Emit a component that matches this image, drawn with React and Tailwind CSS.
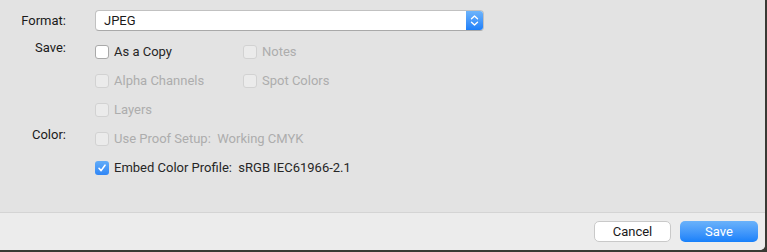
import React from "react";

const font = { fontFamily: 'Roboto, "Liberation Sans", Arial, sans-serif' };

function Check({ checked, disabled }) {
  if (checked) {
    return (
      <span className="flex h-[14px] w-[14px] shrink-0 items-center justify-center rounded-[3px] bg-gradient-to-b from-[#62acf8] to-[#2f86f6]">
        <svg width="10" height="10" viewBox="0 0 10 10">
          <path d="M2 5.3 L4.1 7.6 L8 2.2" fill="none" stroke="white" strokeWidth="1.6" strokeLinecap="round" strokeLinejoin="round" />
        </svg>
      </span>
    );
  }
  return (
    <span
      className={
        "block h-[14px] w-[14px] shrink-0 rounded-[3px] border " +
        (disabled ? "border-[#d2d2d2] bg-[#ebebeb]" : "border-[#a9a9a9] bg-white")
      }
    />
  );
}

function Item({ label, checked, disabled, w }) {
  return (
    <div className={"flex items-center gap-[5px] " + (w ? "w-[148px]" : "")}>
      <Check checked={checked} disabled={disabled} />
      <span className={"text-[13px] leading-[16px] " + (disabled ? "text-[#adadad]" : "text-[#262626]")}>{label}</span>
    </div>
  );
}

function Row({ label, children }) {
  return (
    <div className="flex h-[29px]">
      <div className="w-[66px] pt-[3px] text-right text-[13px] leading-[16px] text-[#1a1a1a]">{label}</div>
      <div className="ml-[29px] flex items-center">{children}</div>
    </div>
  );
}

export default function App() {
  return (
    <div className="h-[252px] w-[767px] bg-[#3a3a34]" style={font}>
      <div className="flex h-[250px] w-[765px] flex-col overflow-hidden rounded-br-[5px] bg-[#e3e3e3]">
        <div className="h-[213px] border-b border-[#d4d4d4] pt-[10px]">
          <div className="flex h-[21px] items-center">
            <div className="w-[66px] text-right text-[13px] leading-[16px] text-[#1a1a1a]">Format:</div>
            <div className="ml-[29px] flex h-[21px] w-[389px] overflow-hidden rounded-[4px] border border-[#c1c1c1] border-b-[#a9a9a9] bg-white">
              <span className="flex-1 pl-[8px] text-[13px] leading-[19px] text-[#1a1a1a]">JPEG</span>
              <span className="flex w-[17px] items-center justify-center bg-gradient-to-b from-[#6db4fb] to-[#1c7ff9]">
                <svg width="9" height="13" viewBox="0 0 9 13">
                  <path d="M1.5 4.8 L4.5 2 L7.5 4.8 M1.5 8.2 L4.5 11 L7.5 8.2" fill="none" stroke="white" strokeWidth="1.4" strokeLinecap="round" strokeLinejoin="round" />
                </svg>
              </span>
            </div>
          </div>
          <div className="mt-[6px]">
            <Row label="Save:">
              <Item label="As a Copy" w />
              <Item label="Notes" disabled />
            </Row>
            <Row label="">
              <Item label="Alpha Channels" disabled w />
              <Item label="Spot Colors" disabled />
            </Row>
            <Row label="">
              <Item label="Layers" disabled />
            </Row>
            <Row label="Color:">
              <Item label={"Use Proof Setup:\u00a0\u00a0Working CMYK"} disabled />
            </Row>
            <Row label="">
              <Item label={"Embed Color Profile:\u00a0\u00a0sRGB IEC61966-2.1"} checked />
            </Row>
          </div>
        </div>
        <div className="flex flex-1 justify-end gap-[9px] bg-[#ececec] pr-[7px] pt-[8px]">
          <button className="h-[21px] w-[77px] rounded-[5px] border border-[#c9c9c9] bg-white text-[13px] leading-[19px] text-[#1a1a1a]">
            Cancel
          </button>
          <button className="h-[21px] w-[78px] rounded-[5px] bg-gradient-to-b from-[#6ab2fa] to-[#1580fa] text-[13px] leading-[21px] text-white">
            Save
          </button>
        </div>
      </div>
    </div>
  );
}
